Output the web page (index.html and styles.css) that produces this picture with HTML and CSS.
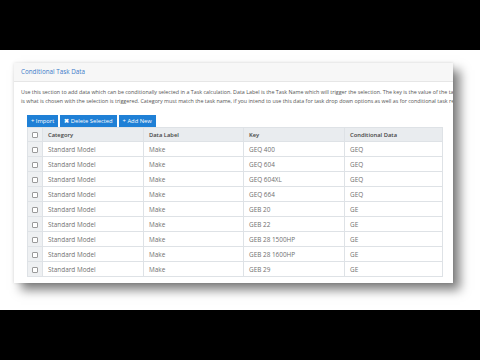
FILE: index.html
```html
<!DOCTYPE html>
<html lang="en">
<head>
  <meta charset="UTF-8">
  <title>Conditional Task Data</title>
  <link rel="stylesheet" href="styles.css">
</head>
<body>

<div class="frame">
  <div class="card">
    <div class="card-header">Conditional Task Data</div>
    <div class="card-body">
      <p class="desc">Use this section to add data which can be conditionally selected in a Task calculation. Data Label is the Task Name which will trigger the selection. The key is the value of the task<br>is what is chosen with the selection is triggered. Category must match the task name, if you intend to use this data for task drop down options as well as for conditional task results.</p>

      <div class="table-wrap">
        <div class="toolbar">
          <button class="btn">+ Import</button>
          <button class="btn"><b>&#10006;</b> Delete Selected</button>
          <button class="btn">+ Add New</button>
        </div>

        <table class="grid">
          <thead>
            <tr>
              <th class="check-col"><span class="check"></span></th>
              <th>Category</th>
              <th>Data Label</th>
              <th>Key</th>
              <th>Conditional Data</th>
            </tr>
          </thead>
          <tbody>
            <tr><td class="check-col"><span class="check"></span></td><td>Standard Model</td><td>Make</td><td>GEQ 400</td><td>GEQ</td></tr>
            <tr><td class="check-col"><span class="check"></span></td><td>Standard Model</td><td>Make</td><td>GEQ 604</td><td>GEQ</td></tr>
            <tr><td class="check-col"><span class="check"></span></td><td>Standard Model</td><td>Make</td><td>GEQ 604XL</td><td>GEQ</td></tr>
            <tr><td class="check-col"><span class="check"></span></td><td>Standard Model</td><td>Make</td><td>GEQ 664</td><td>GEQ</td></tr>
            <tr><td class="check-col"><span class="check"></span></td><td>Standard Model</td><td>Make</td><td>GEB 20</td><td>GE</td></tr>
            <tr><td class="check-col"><span class="check"></span></td><td>Standard Model</td><td>Make</td><td>GEB 22</td><td>GE</td></tr>
            <tr><td class="check-col"><span class="check"></span></td><td>Standard Model</td><td>Make</td><td>GEB 28 1500HP</td><td>GE</td></tr>
            <tr><td class="check-col"><span class="check"></span></td><td>Standard Model</td><td>Make</td><td>GEB 28 1600HP</td><td>GE</td></tr>
            <tr><td class="check-col"><span class="check"></span></td><td>Standard Model</td><td>Make</td><td>GEB 29</td><td>GE</td></tr>
          </tbody>
        </table>
      </div>
    </div>
  </div>
</div>

</body>
</html>
```

FILE: styles.css
```css
body {
  margin: 0;
  background-color: #000;
  font-family: "Open Sans", Arial, sans-serif;
}
.frame {
  margin-top: 50px;
  height: 260px;
  background-color: #fff;
  padding: 13px 0 0 14px;
  box-sizing: border-box;
  overflow: hidden;
}
.card {
  width: 439px;
  height: 220px;
  background-color: #fff;
  box-shadow: 0 0 3px rgba(0, 0, 0, 0.12), 7px 7px 10px rgba(0, 0, 0, 0.5);
  overflow: hidden;
}
.card-header {
  height: 18px;
  line-height: 18px;
  padding-left: 7px;
  background-color: #f7f7f7;
  border-bottom: 1px solid #e6e6e6;
  color: #3d7cc9;
  font-size: 6.3px;
}
.card-body {
  padding: 6px 0 0 7px;
}
.desc {
  margin: 0;
  font-size: 5.35px;
  line-height: 9px;
  color: #555;
  white-space: nowrap;
}
.table-wrap {
  margin: 9px 0 0 6px;
}
.toolbar {
  display: flex;
  gap: 2px;
}
.btn {
  height: 12px;
  padding: 0 4px;
  border: none;
  background-color: #1f80d6;
  color: #fff;
  font-family: inherit;
  font-size: 5.8px;
  line-height: 12px;
}
.btn b {
  font-size: 5.5px;
}
.grid {
  width: 416px;
  border-collapse: collapse;
  table-layout: fixed;
  font-size: 6.4px;
}
.grid th,
.grid td {
  border: 1px solid #dee2e6;
  padding: 0 0 0 5px;
  text-align: left;
  white-space: nowrap;
}
.grid th {
  height: 13px;
  background-color: #e9ecef;
  color: #444;
  font-weight: 600;
  font-size: 5.8px;
}
.grid td {
  height: 14px;
  color: #6f6f6f;
}
.grid th:nth-child(2) { width: 95px; }
.grid th:nth-child(3) { width: 94px; }
.grid th:nth-child(4) { width: 95px; }
.grid .check-col {
  width: 14px;
  padding: 0;
  text-align: center;
  background-color: #eef0f2;
}
.check {
  display: inline-block;
  width: 4px;
  height: 4px;
  border: 1px solid #9a9a9a;
  border-radius: 1px;
  background-color: #fff;
  vertical-align: middle;
}
```
